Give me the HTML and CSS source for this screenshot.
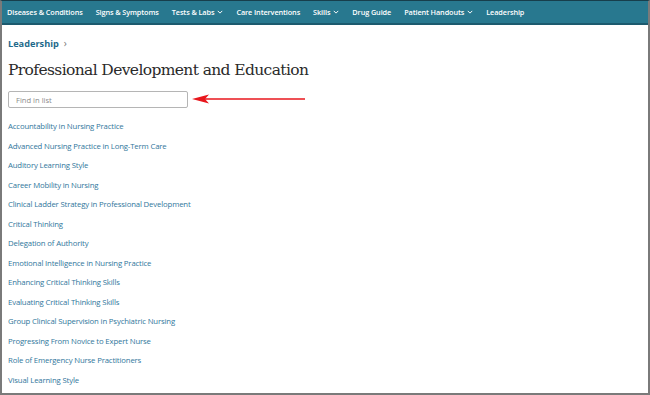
FILE: index.html
```html
<!DOCTYPE html>
<html>
<head>
<meta charset="utf-8">
<link rel="stylesheet" href="styles.css">
</head>
<body>
<div class="frame">
  <nav class="topnav">
    <span class="nav-item">Diseases &amp; Conditions</span>
    <span class="nav-item">Signs &amp; Symptoms</span>
    <span class="nav-item">Tests &amp; Labs <svg class="caret" viewBox="0 0 8 5"><path d="M1 1l3 3 3-3" fill="none" stroke="#fff" stroke-width="1.3"/></svg></span>
    <span class="nav-item">Care Interventions</span>
    <span class="nav-item">Skills <svg class="caret" viewBox="0 0 8 5"><path d="M1 1l3 3 3-3" fill="none" stroke="#fff" stroke-width="1.3"/></svg></span>
    <span class="nav-item">Drug Guide</span>
    <span class="nav-item">Patient Handouts <svg class="caret" viewBox="0 0 8 5"><path d="M1 1l3 3 3-3" fill="none" stroke="#fff" stroke-width="1.3"/></svg></span>
    <span class="nav-item">Leadership</span>
  </nav>
  <main class="content">
    <div class="crumb"><a class="crumb-link">Leadership</a><span class="crumb-sep">›</span></div>
    <h1 class="title">Professional Development and Education</h1>
    <div class="search-row">
      <input class="search" type="text" placeholder="Find in list">
      <svg class="arrow" viewBox="0 0 115 10"><path d="M8 5H113" stroke="#e8161c" stroke-width="1.6"/><path d="M0 5L17 0.5L13 5L17 9.5Z" fill="#e8161c"/></svg>
    </div>
    <ul class="list">
      <li><a>Accountability in Nursing Practice</a></li>
      <li><a>Advanced Nursing Practice in Long-Term Care</a></li>
      <li><a>Auditory Learning Style</a></li>
      <li><a>Career Mobility in Nursing</a></li>
      <li><a>Clinical Ladder Strategy in Professional Development</a></li>
      <li><a>Critical Thinking</a></li>
      <li><a>Delegation of Authority</a></li>
      <li><a>Emotional Intelligence in Nursing Practice</a></li>
      <li><a>Enhancing Critical Thinking Skills</a></li>
      <li><a>Evaluating Critical Thinking Skills</a></li>
      <li><a>Group Clinical Supervision in Psychiatric Nursing</a></li>
      <li><a>Progressing From Novice to Expert Nurse</a></li>
      <li><a>Role of Emergency Nurse Practitioners</a></li>
      <li><a>Visual Learning Style</a></li>
    </ul>
  </main>
</div>
</body>
</html>
```

FILE: styles.css
```css
* { box-sizing: border-box; }
html, body { margin: 0; padding: 0; }
body { width: 650px; height: 395px; overflow: hidden; background: #fff; font-family: "Open Sans", "Liberation Sans", sans-serif; }
.frame {
  width: 650px; height: 395px;
  border-left: 2px solid #7a7a7a;
  border-right: 2px solid #7a7a7a;
  border-bottom: 2px solid #7a7a7a;
  border-top: 1px solid #173e4c;
  display: flex; flex-direction: column;
}
.topnav {
  height: 24px;
  background: #28788f;
  border-bottom: 2px solid #1c5a6e;
  display: flex; align-items: center;
  padding-left: 5px;
  gap: 13px;
  flex-shrink: 0;
}
.nav-item {
  color: #fff; font-size: 7.3px; font-weight: 600; white-space: nowrap; letter-spacing: -0.1px;
  display: flex; align-items: center; gap: 3px;
}
.caret { width: 6px; height: 4px; }
.content { position: relative; padding: 0 6px; flex: 1; }
.crumb { margin-top: 12px; height: 12px; display: flex; align-items: center; gap: 5px; font-size: 9.2px; }
.crumb-link { color: #1f6a8b; font-weight: 700; }
.crumb-sep { color: #777; font-size: 10px; }
.title {
  margin: 11px 0 0 0;
  font-family: "DejaVu Serif", serif;
  font-weight: 400; font-size: 15.5px; line-height: 20px; color: #2a2a2a;
  letter-spacing: -0.62px;
}
.search-row { margin-top: 11px; display: flex; align-items: center; position: relative; }
.search {
  width: 180px; height: 17px;
  border: 1px solid #b5b5b5; border-radius: 2px;
  padding: 0 7px; font-family: "Open Sans", sans-serif; font-size: 7.6px; color: #333;
  outline: none;
}
.search::placeholder { color: #8a8a8a; }
.arrow { position: absolute; left: 184px; top: 3px; width: 115px; height: 10px; }
.list { list-style: none; margin: 9px 0 0 0; padding: 0; }
.list li { height: 19.5px; line-height: 19.5px; font-size: 7.75px; letter-spacing: -0.15px; }
.list a { color: #31779c; }
```
